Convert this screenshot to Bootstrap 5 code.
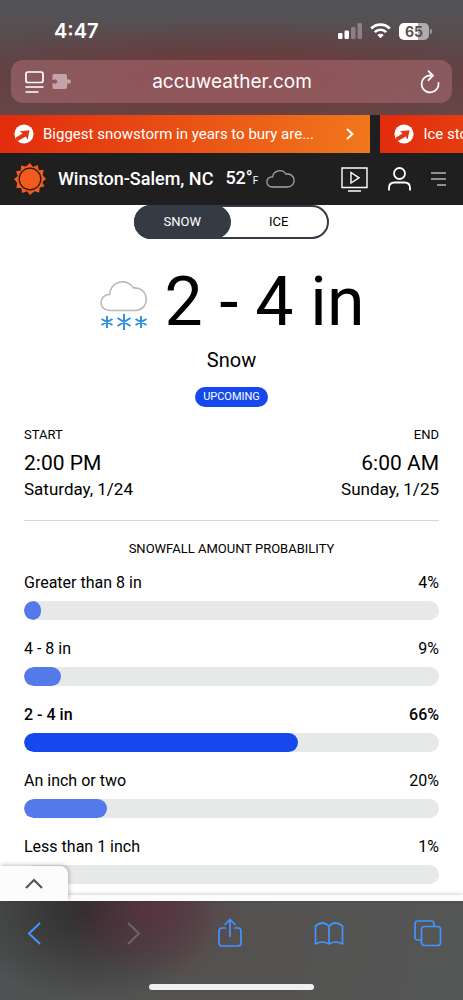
<!DOCTYPE html>
<html lang="en">
<head>
<meta charset="utf-8">
<meta name="viewport" content="width=device-width, initial-scale=1">
<title>Winston-Salem, NC Winter Weather</title>
<link href="https://cdn.jsdelivr.net/npm/bootstrap@5.3.0/dist/css/bootstrap.min.css" rel="stylesheet">
<style>
  body { font-family: Roboto, "Liberation Sans", sans-serif; color: #000; background: #fff; }
  svg { display: block; flex: none; }
  button { color: inherit; }
  .plain { background: none; border: 0; padding: 0; }

  .browser-top {
    height: 115px; padding: 19px 11px 0; color: #fff;
    font-family: Inter, "Liberation Sans", sans-serif;
    background:
      radial-gradient(ellipse 75% 50% at 50% 68%, rgba(122, 46, 46, .75), transparent),
      linear-gradient(#535357, #59494b 55%, #63494b);
  }
  .clock { font-size: 20px; line-height: 24px; font-weight: 600; }
  .status { padding: 0 20px 0 43px; margin-bottom: 17px; }
  .battery {
    width: 30px; height: 17px; border-radius: 5px; color: #5b4f52;
    background: linear-gradient(90deg, #fff 65%, #b3aaac 65%);
    font-size: 14px; line-height: 17px; font-weight: 700;
  }
  .battery-tip { width: 2px; height: 5px; border-radius: 0 2px 2px 0; background: #a39a9c; margin-left: 1px; }
  .address { height: 43px; border-radius: 12px; background: rgba(190, 125, 130, .42); padding: 0 12px 0 14px; }
  .address-text { font-size: 19px; line-height: 24px; padding-right: 28px; }

  .ticker { height: 38px; gap: 10px; background: #1f1f1f; color: #fff; }
  .ticker a {
    flex: 0 0 80%; padding: 0 16px 0 14px; gap: 9px; font-size: 15px;
    background: linear-gradient(100deg, #e22b0c, #f1781d);
  }

  .site-bar { height: 52px; padding: 0 16px 0 14px; background: #1f1f1f; color: #fff; }
  .place { font-size: 18px; line-height: 24px; font-weight: 500; }
  .unit { font-size: 10px; font-weight: 400; }
  .tools { gap: 20px; }

  .report { padding: 0 24px; }
  .switch { width: 195px; height: 34px; border: 2px solid #343b44; border-radius: 17px; font-size: 13px; }
  .switch button { flex: 1; }
  .switch .on { background: #343b44; color: #fff; border-radius: 17px; margin: -2px 0 -2px -2px; }
  .amount { font-size: 68px; line-height: 78px; }
  .kind { font-size: 20px; line-height: 22px; }
  .status-pill { background: #1549ed; font-size: 11px; line-height: 20px; padding: 0 8px; font-weight: 400; }
  .times { margin-top: 18px; }
  .cap { font-size: 13px; line-height: 20px; }
  .hour { font-size: 21px; line-height: 28px; }
  .date { font-size: 17px; line-height: 24px; }
  .rule { height: 1px; background: #d6d6d6; margin: 19px 0 18px; }
  .odds { font-size: 16px; line-height: 24px; margin-bottom: 17px; }
  .odds .progress { height: 19px; border-radius: 10px; background: #e7e9e8; margin-top: 6px; }
  .odds .progress-bar { border-radius: 10px; background: #5479ea; }
  .likely { font-weight: 500; }
  .likely .progress-bar { background: #1549ed; }

  .drawer { height: 6px; background: #fcfcfc; box-shadow: 0 -1px 4px rgba(0, 0, 0, .18); }
  .drawer-tab {
    width: 68px; height: 35px; border-radius: 0 8px 0 0; background: #fcfcfc;
    box-shadow: 1px -1px 4px rgba(0, 0, 0, .25); clip-path: inset(-6px -6px 0 0);
  }

  .browser-bottom {
    height: 99px; padding: 14px 21px 10px 20px; color: #4394ff;
    background:
      radial-gradient(ellipse 90px 75px at 33% 8%, rgba(99, 47, 64, .7), transparent),
      radial-gradient(ellipse 130px 90px at 19% 10%, rgba(40, 38, 38, .85), transparent),
      linear-gradient(100deg, #4f5253, #545250 50%, #545656);
  }
  .home-bar { width: 165px; height: 6px; border-radius: 3px; background: #f1f1f1; }
</style>
</head>
<body>
<div class="d-flex flex-column vh-100 overflow-hidden">

  <header class="browser-top flex-shrink-0">
    <div class="status d-flex align-items-center justify-content-between">
      <span class="clock">4:47</span>
      <div class="d-flex align-items-center">
        <svg class="me-2" width="24" height="16" viewBox="0 0 24 16" fill="#fff"><rect x="0" y="10" width="4.500" height="6" rx="1.200"/><rect x="6.500" y="7.500" width="4.500" height="8.500" rx="1.200"/><g opacity=".3"><rect x="13" y="4" width="4.500" height="12" rx="1.200"/><rect x="19.500" y="0" width="4.500" height="16" rx="1.200"/></g></svg>
        <svg class="me-2" width="21" height="16" viewBox="0 0 21 16" fill="none" stroke="#fff" stroke-width="2.700"><path d="M1.200 5.500a13.200 13.200 0 0 1 18.600 0M4.800 9.100a8.100 8.100 0 0 1 11.400 0"/><path d="M7.300 12a4.600 4.600 0 0 1 6.400 0l-3.200 3.300z" fill="#fff" stroke="none"/></svg>
        <span class="battery text-center">65</span><span class="battery-tip"></span>
      </div>
    </div>
    <div class="address d-flex align-items-center justify-content-between">
      <button class="plain d-flex align-items-center gap-1" aria-label="Page menu">
        <svg width="19" height="22" viewBox="0 0 19 22" fill="none" stroke="#fff" stroke-width="1.700"><rect x="1" y="1" width="17" height="10.500" rx="2"/><path d="M.5 16h18M.5 21h13"/></svg>
        <svg class="ms-1" width="20" height="17" viewBox="0 0 20 17" fill="#c5a3aa"><path d="M2 1h11q2 0 2 2v3.500h.8a2.200 2.200 0 1 1 0 4H15V14q0 2-2 2H2q-1.500 0-1.500-2v-4h1a2.200 2.200 0 1 0 0-3h-1V3Q.5 1 2 1z"/></svg>
      </button>
      <span class="address-text">accuweather.com</span>
      <button class="plain" aria-label="Reload">
        <svg width="20" height="24" viewBox="0 0 20 24" fill="none" stroke="#fff" stroke-width="1.800" stroke-linecap="round" stroke-linejoin="round"><path d="M10.500 5.500a8.500 8.500 0 1 0 8 7.500M8.500 1.200l4.500 4.500-4.500 4.500"/></svg>
      </button>
    </div>
  </header>

  <div class="ticker d-flex flex-shrink-0 overflow-hidden">
    <a href="#" class="d-flex align-items-center text-white text-decoration-none">
      <svg width="20" height="20" viewBox="0 0 20 20"><circle cx="10" cy="10" r="9.600" fill="#fff"/><path d="M6 7.200l9.500-1-1.800 9.300-2-3L3 17.500l-1.500-3.800 7-4.200z" fill="#e2380f"/></svg>
      <span class="text-truncate">Biggest snowstorm in years to bury are...</span>
      <svg class="ms-auto" width="8" height="12" viewBox="0 0 8 12" fill="none" stroke="#fff" stroke-width="2"><path d="M1 1l5.500 5L1 11"/></svg>
    </a>
    <a href="#" class="d-flex align-items-center text-white text-decoration-none">
      <svg width="20" height="20" viewBox="0 0 20 20"><circle cx="10" cy="10" r="9.600" fill="#fff"/><path d="M6 7.200l9.500-1-1.800 9.300-2-3L3 17.500l-1.500-3.800 7-4.200z" fill="#e2380f"/></svg>
      <span class="text-nowrap">Ice storm</span>
    </a>
  </div>

  <nav class="site-bar d-flex align-items-center flex-shrink-0">
    <svg width="32" height="32" viewBox="-16 -16 32 32"><path fill="#f25b1c" d="M0-16l3 4 4.700-1.900 1 4.900 5-.1-1 5L16 0l-3.600 3 2 4.600-4.800.8-.3 5-4.800-1.100L0 16l-3-3.700-4.800 1.600-.9-4.900-5-.1 1-4.900L-16 0l3.700-3-1.700-4.700 4.900-.9.100-5 4.900 1.200z"/><circle r="10.800" fill="#f25b1c" stroke="#1f1f1f" stroke-width="1.300"/></svg>
    <span class="place ms-2 ps-1 text-nowrap">Winston-Salem, NC</span>
    <span class="place ms-2 ps-1 text-nowrap">52°<span class="unit">F</span></span>
    <svg class="ms-2" width="29" height="18" viewBox="0 0 29 18" fill="none" stroke="#a5a5a5" stroke-width="1.300"><path d="M6 17a5 5 0 0 1 0-10.200h.6A7.300 7.300 0 0 1 20 4.200 6.500 6.500 0 1 1 21.500 17z"/></svg>
    <div class="tools d-flex align-items-center ms-auto">
      <button class="plain" aria-label="Video"><svg width="27" height="25" viewBox="0 0 27 25" fill="none" stroke="#fff" stroke-width="1.400"><path d="M1 1h25v19.500H1zM7 24h13"/><path d="M10 5.500v10.500l8-5.200z"/></svg></button>
      <button class="plain" aria-label="Account"><svg width="23" height="24" viewBox="1 0 23 24" fill="none" stroke="#fff" stroke-width="1.800"><circle cx="12.500" cy="6.500" r="5.500"/><path d="M2 23.500v-2.500q0-5.500 5.500-5.500h10q5.500 0 5.500 5.500v2.500"/></svg></button>
      <button class="plain" aria-label="Menu"><svg width="16" height="14" viewBox="0 0 16 14" stroke="#b5b5b5" stroke-width="1.400"><path d="M0 1h15M0 7h15M6 13h9"/></svg></button>
    </div>
  </nav>

  <main class="report flex-grow-1 overflow-hidden">
    <div class="switch d-flex mx-auto">
      <button class="plain on">SNOW</button>
      <button class="plain">ICE</button>
    </div>
    <div class="d-flex justify-content-center align-items-center mt-4">
      <svg class="mt-2" width="50" height="50" viewBox="0 0 50 50" fill="none"><path d="M9.500 29.500a8 8 0 0 1 1.200-16A12.800 12.800 0 0 1 34.500 7 11.300 11.300 0 1 1 37.500 29.500z" stroke="#b9b9b9" stroke-width="1.600"/><g stroke="#2b8be0" stroke-width="1.900"><path d="M8 35v12M2.500 38l11 6M13.500 38l-11 6M25 33v16M18.500 37l13 8M31.500 37l-13 8M42 35v12M36.500 38l11 6M47.500 38l-11 6"/></g></svg>
      <span class="amount ms-3 text-nowrap">2 - 4 in</span>
    </div>
    <div class="kind text-center mt-2">Snow</div>
    <div class="d-flex justify-content-center mt-3"><span class="status-pill badge rounded-pill">UPCOMING</span></div>
    <div class="times d-flex justify-content-between">
      <div>
        <div class="cap">START</div>
        <div class="hour mt-1">2:00 PM</div>
        <div class="date">Saturday, 1/24</div>
      </div>
      <div class="text-end">
        <div class="cap">END</div>
        <div class="hour mt-1">6:00 AM</div>
        <div class="date">Sunday, 1/25</div>
      </div>
    </div>
    <div class="rule"></div>
    <h2 class="cap fw-normal text-center mb-2 pb-1">SNOWFALL AMOUNT PROBABILITY</h2>
    <div class="odds">
      <div class="d-flex justify-content-between"><span>Greater than 8 in</span><span>4%</span></div>
      <div class="progress"><div class="progress-bar" style="width:4%"></div></div>
    </div>
    <div class="odds">
      <div class="d-flex justify-content-between"><span>4 - 8 in</span><span>9%</span></div>
      <div class="progress"><div class="progress-bar" style="width:9%"></div></div>
    </div>
    <div class="odds likely">
      <div class="d-flex justify-content-between"><span>2 - 4 in</span><span>66%</span></div>
      <div class="progress"><div class="progress-bar" style="width:66%"></div></div>
    </div>
    <div class="odds">
      <div class="d-flex justify-content-between"><span>An inch or two</span><span>20%</span></div>
      <div class="progress"><div class="progress-bar" style="width:20%"></div></div>
    </div>
    <div class="odds">
      <div class="d-flex justify-content-between"><span>Less than 1 inch</span><span>1%</span></div>
      <div class="progress"><div class="progress-bar" style="width:1%"></div></div>
    </div>
  </main>

  <div class="drawer position-relative flex-shrink-0">
    <button class="drawer-tab plain position-absolute bottom-0 start-0 d-flex align-items-center justify-content-center" aria-label="Expand">
      <svg width="18" height="11" viewBox="0 0 18 11" fill="none" stroke="#555" stroke-width="2.200"><path d="M1 10l8-8 8 8"/></svg>
    </button>
  </div>

  <footer class="browser-bottom d-flex flex-column flex-shrink-0">
    <div class="d-flex justify-content-between align-items-center">
      <button class="plain" aria-label="Back"><svg width="28" height="36" viewBox="0 0 28 36" fill="none" stroke="currentColor" stroke-width="2"><path d="M20 8L9 18.500 20 29"/></svg></button>
      <button class="plain" aria-label="Forward"><svg width="28" height="36" viewBox="0 0 28 36" fill="none" stroke="#6f6568" stroke-width="2"><path d="M10 8l11 10.500L10 29"/></svg></button>
      <button class="plain" aria-label="Share"><svg width="28" height="36" viewBox="0 0 28 36" fill="none" stroke="currentColor" stroke-width="1.700"><path d="M10 13H6q-3 0-3 3v12q0 3 3 3h16q3 0 3-3V16q0-3-3-3h-4M14 22V5M8.500 10L14 4.500l5.500 5.500"/></svg></button>
      <button class="plain" aria-label="Bookmarks"><svg width="30" height="36" viewBox="0 0 30 36" fill="none" stroke="currentColor" stroke-width="1.700" stroke-linejoin="round"><path d="M15 11q-6.500-6-13.500 0v18q7-4 13.500 0 6.500-4 13.500 0V11q-7-6-13.500 0zv18"/></svg></button>
      <button class="plain" aria-label="Tabs"><svg width="28" height="36" viewBox="0 0 28 36" fill="none" stroke="currentColor" stroke-width="1.700"><rect x="7.500" y="11.500" width="19" height="19" rx="3"/><path d="M7.500 25H4q-3 0-3-3V9q0-3 3-3h13q3 0 3 3v2.500"/></svg></button>
    </div>
    <div class="home-bar mx-auto mt-auto"></div>
  </footer>
</div>
<script src="https://cdn.jsdelivr.net/npm/bootstrap@5.3.0/dist/js/bootstrap.bundle.min.js"></script>
</body>
</html>
